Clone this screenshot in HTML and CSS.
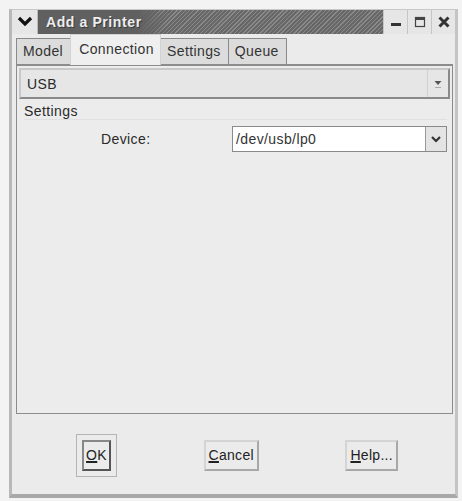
FILE: index.html
```html
<!DOCTYPE html>
<html>
<head>
<meta charset="utf-8">
<link rel="stylesheet" href="styles.css">
</head>
<body>
<div class="window">
  <div class="titlebar">
    <div class="menu-btn">
      <svg width="16" height="12" viewBox="0 0 16 12"><path d="M2 2 L8 8 L14 2" fill="none" stroke="#111" stroke-width="3.2"/></svg>
    </div>
    <div class="title"><span>Add a Printer</span></div>
    <div class="wbtn">
      <svg width="14" height="14" viewBox="0 0 14 14"><rect x="2" y="8" width="10" height="3" fill="#333"/></svg>
    </div>
    <div class="wbtn">
      <svg width="14" height="14" viewBox="0 0 14 14"><rect x="2.5" y="2.5" width="9" height="9" fill="none" stroke="#444" stroke-width="1.2"/><rect x="2" y="2" width="10" height="3" fill="#444"/></svg>
    </div>
    <div class="wbtn">
      <svg width="14" height="14" viewBox="0 0 14 14"><path d="M2.5 2.5 L11.5 11.5 M11.5 2.5 L2.5 11.5" stroke="#333" stroke-width="3"/></svg>
    </div>
  </div>
  <div class="client">
    <div class="tabs">
      <div class="tab">Model</div>
      <div class="tab active">Connection</div>
      <div class="tab">Settings</div>
      <div class="tab">Queue</div>
    </div>
    <div class="panel">
      <div class="combo">
        <span class="combo-text">USB</span>
        <span class="combo-arrow">
          <svg width="10" height="12" viewBox="0 0 10 12"><path d="M1.5 3 L8.5 3 L5 7 Z" fill="#555"/><path d="M2 9.5 L8 9.5" stroke="#aaa" stroke-width="1"/></svg>
        </span>
      </div>
      <div class="section">
        <div class="section-label">Settings</div>
        <div class="row">
          <span class="field-label">Device:</span>
          <div class="entry-combo">
            <span class="entry">/dev/usb/lp0</span>
            <span class="entry-arrow">
              <svg width="12" height="10" viewBox="0 0 12 10"><path d="M2 3 L6 7 L10 3" fill="none" stroke="#333" stroke-width="2.2"/></svg>
            </span>
          </div>
        </div>
      </div>
    </div>
    <div class="buttons">
      <div class="focus"><button class="btn btn-ok"><u>O</u>K</button></div>
      <button class="btn"><u>C</u>ancel</button>
      <button class="btn"><u>H</u>elp...</button>
    </div>
  </div>
</div>
</body>
</html>
```

FILE: styles.css
```css
html, body {
  margin: 0;
  padding: 0;
}
body {
  background: #f3f3f3;
  font-family: "Liberation Sans", Arial, sans-serif;
  font-size: 14px;
  color: #2a2a2a;
  letter-spacing: 0.4px;
}
.window {
  margin: 9px 6px 0 9px;
  width: 443px;
  height: 484px;
  border-left: 3px solid #b8b8b8;
  border-right: 3px solid #c4c4c4;
  border-bottom: 4px solid #a8a8a8;
  border-top: 1px solid #c8c8c8;
  background: #ebebeb;
  display: flex;
  flex-direction: column;
}
.titlebar {
  display: flex;
  height: 24px;
  flex: none;
}
.menu-btn {
  width: 25px;
  background: #e6e6e6;
  border-right: 1px solid #bbb;
  display: flex;
  align-items: center;
  justify-content: center;
}
.title {
  flex: 1;
  display: flex;
  align-items: center;
  padding-left: 8px;
  background:
    linear-gradient(90deg, rgba(96,96,96,1) 0, rgba(96,96,96,1) 100px, rgba(96,96,96,0) 130px),
    repeating-linear-gradient(135deg, #686868 0 2px, #8a8a8a 2px 3px);
  color: #eeeeee;
  font-weight: bold;
  font-size: 14px;
  letter-spacing: 0.6px;
  text-shadow: 1px 1px 0 #3a3a3a;
}
.wbtn {
  width: 23px;
  background: #e6e6e6;
  border-left: 1px solid #c6c6c6;
  display: flex;
  align-items: center;
  justify-content: center;
}
.client {
  flex: 1;
  display: flex;
  flex-direction: column;
  padding: 0 2px 0 4px;
}
.tabs {
  display: flex;
  align-items: flex-end;
  height: 30px;
  flex: none;
}
.tab {
  height: 26px;
  line-height: 25px;
  padding: 0 7px 0 6px;
  border: 1px solid #8a8a8a;
  border-bottom: none;
  background: #dcdcdc;
  color: #333;
  box-sizing: border-box;
  margin-right: -1px;
}
.tab.active {
  height: 31px;
  line-height: 29px;
  background: #efefef;
  border-color: #d2d2d2;
  position: relative;
  top: 1px;
  padding: 0 6px 0 8px;
}
.panel {
  height: 350px;
  flex: none;
  border: 1px solid #8c8c8c;
  border-top: 2px solid #8c8c8c;
  background: #ececec;
  box-sizing: border-box;
  padding: 2px 2px;
  display: flex;
  flex-direction: column;
}
.combo {
  height: 31px;
  border: 2px solid #8a8a8a;
  border-top-color: #c8c8c8;
  border-left-color: #c8c8c8;
  background: #e6e6e6;
  display: flex;
  align-items: center;
  box-sizing: border-box;
}
.combo-text {
  flex: 1;
  padding-left: 6px;
}
.combo-arrow {
  width: 20px;
  align-self: stretch;
  border-left: 1px solid #d0d0d0;
  display: flex;
  align-items: center;
  justify-content: center;
}
.section {
  padding: 4px 3px 0 5px;
}
.section-label {
  line-height: 16px;
  border-bottom: 1px solid #e0e0e0;
}
.row {
  display: flex;
  align-items: center;
  margin-top: 6px;
}
.field-label {
  width: 76px;
  margin-left: 77px;
  margin-right: 55px;
}
.entry-combo {
  flex: 1;
  display: flex;
  height: 26px;
  border: 1px solid #8a8a8a;
  box-sizing: border-box;
  background: #fff;
}
.entry {
  flex: 1;
  padding-left: 3px;
  line-height: 24px;
  color: #333;
}
.entry-arrow {
  width: 20px;
  background: #e4e4e4;
  border-left: 1px solid #999;
  display: flex;
  align-items: center;
  justify-content: center;
}
.buttons {
  display: flex;
  align-items: center;
  justify-content: space-between;
  padding: 2px 55px 0 60px;
  flex: 1;
}
.focus {
  border: 1px solid #b4b4b4;
  padding: 5px;
  display: flex;
}
.btn {
  font-family: "Liberation Sans", Arial, sans-serif;
  font-size: 14px;
  letter-spacing: 0.3px;
  color: #222;
  background: #ebebeb;
  border: 2px solid #a8a8a8;
  border-top-color: #d4d4d4;
  border-left-color: #d4d4d4;
  height: 31px;
  padding: 0 3px;
  margin: 0;
}
.btn-ok {
  border: 2px solid #555;
  border-top-color: #888;
  border-left-color: #888;
  width: 29px;
  padding: 0;
}
u {
  text-decoration-thickness: 2px;
}
```
